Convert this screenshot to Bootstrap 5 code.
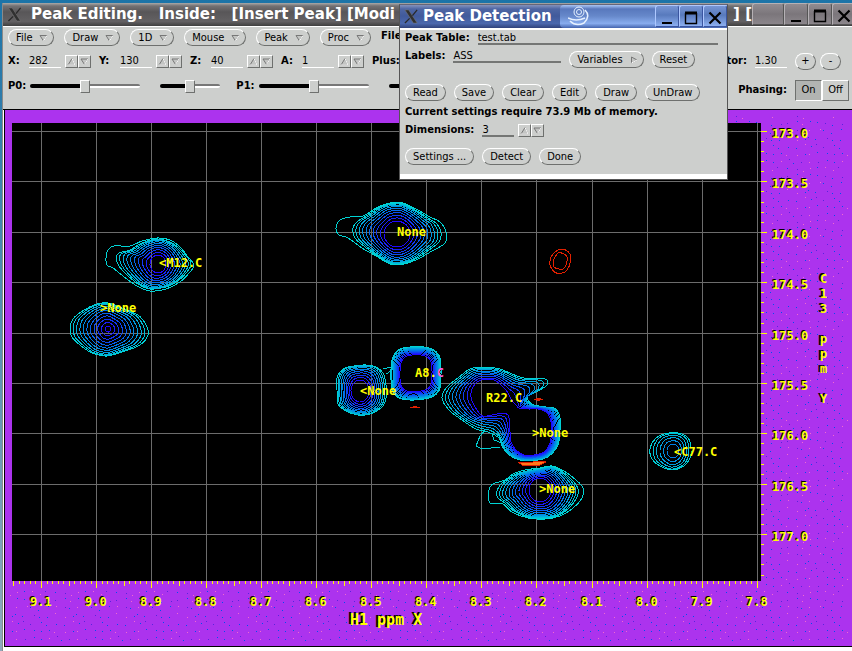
<!DOCTYPE html>
<html lang="en">
<head>
<meta charset="utf-8">
<meta name="viewport" content="width=device-width, initial-scale=1">
<title>Peak Editing</title>
<link href="https://cdn.jsdelivr.net/npm/bootstrap@5.3.0/dist/css/bootstrap.min.css" rel="stylesheet">
<style>
  :root { --face: #cdcfcd; --shade: #6e706e; --lit: #fff; }
  body { background: linear-gradient(#1c74a8, #8fa9bd); font: 11px/14px "DejaVu Sans Condensed", "DejaVu Sans", sans-serif; color: #000; padding: 3px 0 0 2px; overflow-x: hidden; }
  .editor { min-height: calc(100vh - 3px); background: #fff; border-left: 1px solid #8a8a8a; overflow: hidden; }
  .titlebar { height: 23px; font: bold 15px/22px "DejaVu Sans", sans-serif; color: #fff; white-space: pre; overflow: hidden; background: linear-gradient(#a9a9a9, #737173 3px, #585658 9px, #636163 80%, #3f3f3f); }
  .titlebar svg { display: block; }
  .winbtn { width: 24px; height: 22px; padding: 0; border: 1px solid; border-color: #b5b1b5 #555 #555 #b5b1b5; border-radius: 3px 3px 0 0; background: linear-gradient(#918c91, #7b767b 50%, #8b868b); flex-shrink: 0; }
  .winbtn svg { margin: 4px auto 0; }
  .blankcap { width: 32px; }
  .cut-edge { margin-right: -4px; }
  .panel-face { background: var(--face); }
  .controls { height: 84px; border-top: 1px solid #fff; border-bottom: 1px solid #000; padding: 2px 3px 0 5px; }
  .cap { font: bold 10px/14px "DejaVu Sans", sans-serif; white-space: nowrap; }
  .pill { height: 17px; padding: 0 7px; border: 1px solid; border-color: #fff var(--shade) var(--shade) #fff; border-radius: 9px; background: transparent; line-height: 14px; color: #000; white-space: nowrap; }
  .pill svg, .spin svg { display: block; }
  .menu-pill { padding: 0 5px 0 7px; gap: 7px; }
  .row-menus { height: 19px; gap: 10px; }
  .row-values { height: 26px; }
  .row-sliders { height: 24px; }
  .value-set { width: 91px; }
  .field { border: 0; border-bottom: 1px solid #fff; background: transparent; width: 32px; height: 14px; padding: 0; outline: 0; color: #000; line-height: 12px; border-radius: 0; }
  .field.dark { border-bottom: 2px solid #747674; }
  .field.mid { width: 108px; }
  .spin { width: 13px; height: 13px; padding: 1px; border: 1px solid; border-color: #fff var(--shade) var(--shade) #fff; background: transparent; }
  .slide { -webkit-appearance: none; appearance: none; height: 13px; margin: 0; background: transparent; width: 110px; }
  .slide.short { width: 60px; margin-left: 20px; }
  .slide::-webkit-slider-runnable-track { height: 4px; border-radius: 2px; background: linear-gradient(90deg, #000 50%, transparent 50%), linear-gradient(#777 50%, #fff 50%); }
  .slide::-webkit-slider-thumb { -webkit-appearance: none; width: 10px; height: 13px; margin-top: -4px; background: var(--face); border: 1px solid; border-color: #fff var(--shade) var(--shade) #fff; border-radius: 1px; }
  .round { width: 21px; padding: 0; }
  .toggle { height: 21px; width: 27px; padding: 0; border: 1px solid; border-color: #fff var(--shade) var(--shade) #fff; background: transparent; }
  .toggle.pressed { background: #b2b4b2; border-color: var(--shade) #fff #fff var(--shade); }
  .plot { background: #ac33ee; border-left: 1px solid #000; border-bottom: 1px solid #000; margin-left: 1px; }
  .plot svg { display: block; width: 100%; height: auto; font: bold 12px "DejaVu Sans Mono", monospace; fill: #ff0; }
  .peaktag { font-weight: bold; }
  .axis-text { text-shadow: -1px -1px #000; }
  .axis-name { font-size: 15px; text-shadow: -2px -1px #000; }
  .axis-down { font-size: 12px; text-shadow: -2px -1px #000; }
  .dialog-win { position: absolute; left: 399px; top: 4px; width: 329px; background: var(--face); border: 1px solid #555; border-top-color: #667; }
  .dialog-win .titlebar { background: linear-gradient(#8593bd, #4e66a4 4px, #415a9b 11px, #4b68ad 80%, #30427b); }
  .sheen { background: linear-gradient(#a9c6f5, #5878bd 4px, #6688ca 11px, #88acee 80%, #4464ae); border-radius: 4px 0 0 4px; }
  .dialog-win .winbtn { border-color: #aec8ff #3a55a0 #3a55a0 #aec8ff; background: linear-gradient(#7695d4, #587abd 45%, #8caff0); }
  .dialog-body { border-top: 2px solid #fff; border-bottom: 5px solid #fff; padding: 1px 9px 9px 5px; height: 151px; }
  .drop { margin-top: 2px; }
</style>
</head>
<body>
<svg width="0" height="0" class="d-none">
  <defs>
    <symbol id="down" viewBox="0 0 9 8"><path d="M1 1.500H8L4.500 7Z" fill="#c3c5c3" stroke="#777" /><path d="M8 1.500L4.500 7" stroke="#fff"/></symbol>
    <symbol id="up" viewBox="0 0 9 9"><path d="M1 8L5 1.500L8 8Z" fill="#c3c5c3" stroke="#777"/><path d="M1 8H8L5 1.500" fill="none" stroke="#fff"/></symbol>
    <symbol id="right" viewBox="0 0 8 8"><path d="M1.500 1V7L7 4Z" fill="#c3c5c3" stroke="#777"/><path d="M1.500 7L7 4" stroke="#fff"/></symbol>
    <symbol id="xlogo" viewBox="0 0 16 16"><path d="M1 1H5L14 15H10Z" fill="#303030" stroke="#777" stroke-width=".6"/><path d="M14 1L9 7M6 10L1 15" stroke="#292929" stroke-width="1.400"/></symbol>
    <symbol id="wmin" viewBox="0 0 14 14"><path d="M2 12H12" stroke="#000" stroke-width="2"/></symbol>
    <symbol id="wmax" viewBox="0 0 14 14"><path d="M1 2H13M1.500 2V12.500H12.500V2" fill="none" stroke="#000" stroke-width="1.400"/><path d="M1 2H13" stroke="#000" stroke-width="3"/></symbol>
    <symbol id="wclose" viewBox="0 0 14 14"><path d="M1.500 1.500L12.500 12.500M12.500 1.500L1.500 12.500" stroke="#000" stroke-width="2.200"/></symbol>
  </defs>
</svg>

<main class="editor d-flex flex-column">
  <header class="titlebar d-flex">
    <svg class="flex-shrink-0 mt-1 ms-1 me-2" width="16" height="15"><use href="#xlogo"/></svg><span>Peak Editing.   Inside:   [Insert Peak] [Modi</span>
    <span class="ms-auto">] [</span>
    <button class="winbtn blankcap" aria-label="Window menu"></button>
    <button class="winbtn" aria-label="Minimize"><svg width="14" height="14"><use href="#wmin"/></svg></button>
    <button class="winbtn" aria-label="Maximize"><svg width="14" height="14"><use href="#wmax"/></svg></button>
    <button class="winbtn cut-edge" aria-label="Close"><svg width="14" height="14"><use href="#wclose"/></svg></button>
  </header>

  <section class="controls panel-face">
    <div class="row-menus d-flex align-items-start" id="menus"></div>
    <div class="row-values d-flex align-items-center" id="values"></div>
    <div class="row-sliders d-flex align-items-center">
      <label class="cap" for="p0">P0:</label>
      <input id="p0" type="range" class="slide ms-1" value="50">
      <input type="range" class="slide short" value="50" aria-label="P0 fine">
      <label class="cap ms-3" for="p1">P1:</label>
      <input id="p1" type="range" class="slide ms-1" value="50">
      <input type="range" class="slide short" value="50" aria-label="P1 fine">
      <div class="d-flex ms-auto mt-2 align-items-center">
        <span class="cap me-2">Phasing:</span>
        <button class="toggle pressed">On</button><button class="toggle">Off</button>
      </div>
    </div>
  </section>

  <section class="plot">
    <svg viewBox="5 110 847 536" role="img" aria-label="Peak contour plot" id="chart">
      <defs>
        <pattern id="speckle" width="61" height="53" patternUnits="userSpaceOnUse"></pattern>
      </defs>
      <path fill="url(#speckle)" d="M729 116H848V643H10V588H765V123H729Z"/>
      <rect x="12" y="123" width="749" height="458" fill="#000"/>
      <g id="grid" shape-rendering="crispEdges"></g>
      <g id="contours" fill="none" shape-rendering="crispEdges"></g>
      <g shape-rendering="crispEdges" fill="none" stroke="#00cfd4">
        <path d="M485 430L480 436L476 446L482 449L500 447M492 433L494 440L502 443M498 433L501 439M383 369L391 367M386 374L391 371"/>
      </g>
      <g shape-rendering="crispEdges" fill="none" stroke="#e22000">
        <path d="M550 265Q549 255 558 250Q565 247 570 254Q572 266 565 272Q554 277 550 265ZM553 265Q553 258 558 253Q564 252 567 257Q568 265 563 269Q555 270 553 265Z"/>
        <path d="M410 407.500H420M413 406.500H417M534 399.500H543M536 398.500H541M537 400.500H540"/>
        <path fill="#ff7a18" d="M519 462.500L530 463L536 461L546 462L540 465L530 466L522 465Z"/>
      </g>
      <g id="tags"></g>
      <g id="axes"></g>
    </svg>
  </section>
</main>

<aside class="dialog-win" aria-label="Peak Detection">
  <header class="titlebar d-flex">
    <svg class="flex-shrink-0 mt-1 ms-1 me-1" width="15" height="15"><use href="#xlogo"/></svg><span>Peak Detection</span>
    <div class="sheen flex-grow-1 d-flex ms-2">
      <svg class="ms-2" width="22" height="22" fill="none" stroke="#e6f1ff"><circle cx="11" cy="7" r="5"/><circle cx="11" cy="7" r="2.500"/><path d="M17 5Q23 11 16 18Q8 22 2 16M0 13Q8 17 17 13" stroke-width="1.500"/></svg>
      <button class="winbtn ms-auto" aria-label="Minimize"><svg width="14" height="14"><use href="#wmin"/></svg></button>
      <button class="winbtn" aria-label="Maximize"><svg width="14" height="14"><use href="#wmax"/></svg></button>
      <button class="winbtn" aria-label="Close"><svg width="14" height="14"><use href="#wclose"/></svg></button>
    </div>
  </header>
  <form class="dialog-body d-flex flex-column">
    <div class="d-flex align-items-center pb-1">
      <label class="cap" for="tab">Peak Table:</label>
      <input id="tab" class="field dark flex-grow-1 ms-2" value="test.tab">
    </div>
    <div class="d-flex align-items-start">
      <label class="cap" for="lab">Labels:</label>
      <input id="lab" class="field dark mid ms-2" value="ASS">
      <button type="button" class="pill menu-pill d-flex align-items-center ms-2 drop">Variables <svg width="8" height="8"><use href="#right"/></svg></button>
      <button type="button" class="pill ms-2 drop">Reset</button>
    </div>
    <div class="d-flex gap-2 mt-3">
      <button type="button" class="pill">Read</button><button type="button" class="pill">Save</button><button type="button" class="pill">Clear</button><button type="button" class="pill">Edit</button><button type="button" class="pill">Draw</button><button type="button" class="pill">UnDraw</button>
    </div>
    <div class="cap mt-1">Current settings require 73.9 Mb of memory.</div>
    <div class="d-flex align-items-center mt-1">
      <label class="cap" for="dim">Dimensions:</label>
      <input id="dim" class="field dark ms-2 me-1" value="3">
      <button type="button" class="spin" aria-label="More"><svg width="9" height="9"><use href="#up"/></svg></button><button type="button" class="spin" aria-label="Fewer"><svg width="9" height="9"><use href="#down"/></svg></button>
    </div>
    <div class="d-flex gap-2 mt-auto">
      <button type="button" class="pill">Settings ...</button><button type="button" class="pill">Detect</button><button type="button" class="pill">Done</button>
    </div>
  </form>
</aside>

<script>
  const el = id => document.getElementById(id);

  // toolbar
  el('menus').innerHTML = ['File', 'Draw', '1D', 'Mouse', 'Peak', 'Proc'].map(t =>
    `<button class="pill menu-pill d-flex align-items-center">${t}<svg width="9" height="8"><use href="#down"/></svg></button>`).join('') +
    '<span class="cap">File</span>';
  el('values').innerHTML = [['X', 282], ['Y', 130], ['Z', 40], ['A', 1]].map(([n, v]) =>
    `<div class="value-set d-flex align-items-center"><label class="cap flex-grow-1" for="v${n}">${n}:</label>
     <input id="v${n}" class="field me-1" value="${v}"><button class="spin" aria-label="${n} up"><svg width="9" height="9"><use href="#up"/></svg></button><button class="spin me-2" aria-label="${n} down"><svg width="9" height="9"><use href="#down"/></svg></button></div>`).join('') +
    `<span class="cap">Plus:</span><div class="d-flex ms-auto align-items-center"><label class="cap me-2" for="factor">Factor:</label>
     <input id="factor" class="field me-2" value="1.30"><button class="pill round me-1">+</button><button class="pill round me-2">-</button></div>`;

  // dotted margin
  let dots = '', seed = 7;
  const rnd = () => (seed = (seed * 16807) % 2147483647) / 2147483647;
  for (let y = 0; y < 7; y++) for (let x = 0; x < 8; x++)
    dots += `<rect x="${Math.floor(x * 7.6 + rnd() * 5)}" y="${Math.floor(y * 7.5 + rnd() * 5)}" width="1" height="1" fill="${['#0050f0', '#0050f0', '#5a22dd', '#f06ad0'][Math.floor(rnd() * 4)]}"/>`;
  el('speckle').innerHTML = dots;

  // grid, ticks and axis captions
  let grid = '', axes = '';
  for (let i = 0; i < 14; i++) {
    const x = Math.round(41 + i * 55.05);
    grid += `<rect x="${x}" y="123" width="1" height="458" fill="#6c6c6c"/>`;
    axes += `<text class="axis-text" x="${x - 11}" y="606">${(9.1 - i / 10).toFixed(1)}</text>`;
  }
  for (let k = -5; k <= 130; k++)
    grid += `<rect x="${Math.round(41 + k * 5.505)}" y="581" width="1" height="${k % 10 === 0 ? 7 : k % 5 === 0 ? 5 : 3}" fill="#ff0"/>`;
  for (let i = 0; i < 9; i++) {
    const y = Math.round(131 + i * 50.4);
    grid += `<rect x="12" y="${y}" width="749" height="1" fill="#6c6c6c"/>`;
    axes += `<text class="axis-text" x="772" y="${y + 7}">${(173 + i / 2).toFixed(1)}</text>`;
  }
  for (let k = 0; k < 45; k++)
    grid += `<rect x="761" y="${Math.round(131 + k * 10.08)}" width="${k % 5 ? 3 : 6}" height="1" fill="#ff0"/>`;
  axes += '<text class="axis-name" x="350" y="625">H1 ppm X</text>';
  [...'C13 ppm Y'].forEach((c, i) => { if (c !== ' ') axes += `<text class="axis-down" x="820" y="${283 + i * 15}">${c}</text>`; });
  el('grid').innerHTML = grid;
  el('axes').innerHTML = axes;

  // contours: an outer outline shrinks level by level to an inner one;
  // f holds the faint outermost line where it has a lobe of its own
  const merged = [[442,398],[447,387],[458,378],[470,369],[484,367],[500,369],[512,374],[524,378],[545,379],[547,385],[538,391],[529,395],[528,400],[534,405],[546,407],[556,409],[560,418],[560,430],[558,445],[549,456],[538,460],[520,460],[509,455],[502,446],[499,438],[488,432],[476,429],[462,420],[449,410]];
  const mergedIn = [[471,397],[472,389],[476,383],[481,380],[486,380],[494,380],[500,384],[506,390],[509,395],[511,399],[514,403],[517,406],[519,408],[528,409],[538,409],[546,412],[550,418],[552,428],[550,443],[544,452],[534,455],[524,455],[516,450],[511,442],[510,432],[508,415],[497,414],[483,416],[475,407]];
  const peaks = [
    { n: 10, c: [158,264,8,9],
      f: [[106,258],[108,250],[114,246],[130,246],[142,241],[157,238],[170,240],[180,247],[188,257],[194,265],[190,272],[180,282],[166,289],[150,291],[137,286],[123,276],[113,268],[107,265]],
      o: [[116,258],[119,253],[130,250],[142,243],[157,239],[170,242],[179,248],[187,257],[191,264],[187,272],[178,281],[166,287],[150,289],[138,284],[126,274],[119,266]] },
    { n: 11, c: [108,329,3,3], o: [[70,329],[73,319],[84,310],[97,304],[108,303],[122,308],[138,315],[146,325],[148,335],[140,345],[125,351],[112,355],[105,356],[92,353],[80,345],[72,337]] },
    { n: 10, c: [397,234,13,13],
      f: [[336,228],[340,220],[350,217],[363,216],[378,207],[390,203],[403,203],[418,210],[430,217],[440,222],[446,232],[445,243],[432,251],[418,259],[404,264],[390,264],[378,257],[362,248],[348,238],[339,235]],
      o: [[353,228],[358,221],[368,215],[380,207],[390,204],[403,204],[417,211],[428,218],[437,224],[441,233],[439,242],[429,250],[417,258],[404,263],[390,263],[378,256],[365,247],[355,238]] },
    { n: 10, c: [360,391,9,11], o: [[337,390],[337,378],[343,369],[354,366],[366,365],[376,367],[383,373],[386,385],[386,398],[382,407],[370,414],[358,415],[346,411],[338,404]] },
    { n: 9, c: [416,373,16,18], sq: 1, o: [[391,373],[392,360],[398,350],[410,347],[424,347],[434,350],[440,358],[441,372],[440,388],[434,396],[424,399],[410,400],[399,398],[392,390]] },
    { n: 9, i: mergedIn, o: merged },
    { n: 11, c: [540,490,11,12],
      f: [[489,490],[493,484],[505,480],[513,474],[525,470],[540,468],[552,466],[564,471],[576,480],[583,488],[582,498],[573,508],[560,516],[545,519],[528,518],[512,512],[503,504],[490,503]],
      o: [[497,491],[501,484],[508,479],[516,474],[527,471],[540,469],[552,467],[563,472],[573,481],[578,489],[577,497],[570,507],[559,515],[545,518],[528,517],[514,511],[505,503],[498,498]] },
    { n: 6, top: .45, c: [673,451,6,7], o: [[650,449],[655,439],[664,434],[678,433],[688,438],[691,448],[690,458],[684,466],[672,470],[660,466],[652,459]] }
  ];
  const spline = p => {
    const n = p.length, f = v => v.toFixed(1);
    let d = `M${f(p[0][0])} ${f(p[0][1])}`;
    for (let i = 0; i < n; i++) {
      const a = p[(i + n - 1) % n], b = p[i], c = p[(i + 1) % n], e = p[(i + 2) % n];
      d += `C${[b[0] + (c[0] - a[0]) / 6, b[1] + (c[1] - a[1]) / 6, c[0] - (e[0] - b[0]) / 6, c[1] - (e[1] - b[1]) / 6, c[0], c[1]].map(f).join(' ')}`;
    }
    return d + 'Z';
  };
  el('contours').innerHTML = peaks.map(k => {
    const inner = k.i || k.o.map(([x, y]) => {
      const [cx, cy, rx, ry] = k.c;
      if (k.sq) return [cx + (x - cx) * rx / 25, cy + (y - cy) * ry / 26];
      const a = Math.atan2(y - cy, x - cx);
      return [cx + rx * Math.cos(a), cy + ry * Math.sin(a)];
    });
    let s = k.f ? `<path stroke="#00d4d4" d="${spline(k.f)}"/>` : '';
    const bunch = k.i || k.sq ? 1.15 : 1.6;
    for (let l = 0; l < k.n; l++) {
      const t = l / (k.n - 1), ux = Math.pow(t, 1.05), uy = Math.pow(t, bunch), h = t * (k.top || 1);
      const rgb = h < .5 ? [0, 208 - 180 * h, 212 + 40 * h] : [64 * (h - .5), 118 - 220 * (h - .5), 235 + 40 * (h - .5)];
      s += `<path stroke="rgb(${rgb.map(Math.round)})" d="${spline(k.o.map(([x, y], j) => [x + (inner[j][0] - x) * ux, y + (inner[j][1] - y) * uy]))}"/>`;
    }
    return s;
  }).join('');

  el('tags').innerHTML = [[159,267,'<M12.C'],[100,312,'>None'],[397,236,'None'],[360,395,'<None'],[415,377,'A8.','C'],[486,402,'R22.C'],[532,437,'>None'],[539,493,'>None'],[674,456,'<C77.C']].map(([x, y, t, tail]) =>
    `<text class="peaktag" x="${x}" y="${y}">${t.replace('<', '&lt;')}${tail ? `<tspan fill="#ff5fd8">${tail}</tspan>` : ''}</text>`).join('');
</script>
<script src="https://cdn.jsdelivr.net/npm/bootstrap@5.3.0/dist/js/bootstrap.bundle.min.js"></script>
</body>
</html>
